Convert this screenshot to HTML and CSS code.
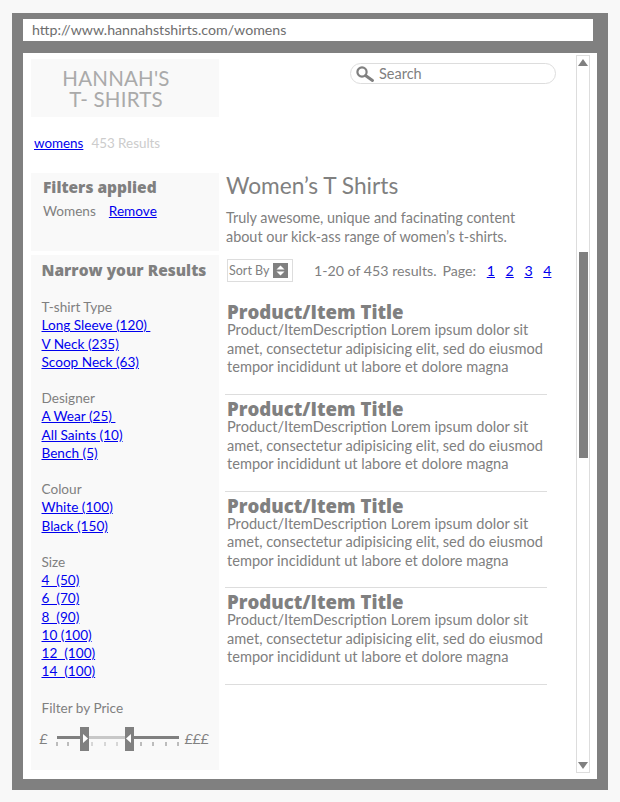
FILE: index.html
```html
<!DOCTYPE html>
<html lang="en">
<head>
  <meta charset="UTF-8" />
  <title>Hannah's T-Shirts - Womens</title>
  <link rel="stylesheet" href="styles.css">
</head>
<body>

<div class="frame">
  <div class="url-bar">http://www.hannahstshirts.com/womens</div>

  <div class="window">
    <div class="page">
      <div class="header">
        <div class="logo">HANNAH'S<br>T- SHIRTS</div>
        <div class="search">
          <svg class="search-icon" width="20" height="18" viewBox="0 0 20 18">
            <circle cx="7" cy="7" r="4.6" fill="none" stroke="#808080" stroke-width="2.2"/>
            <path d="M10.5 10.5 L17.5 15.5" stroke="#808080" stroke-width="3" stroke-linecap="round"/>
          </svg>
          <span>Search</span>
        </div>
      </div>

      <div class="crumbs"><a href="#">womens</a><span class="count">453 Results</span></div>

      <div class="columns">
        <div class="sidebar">
          <div class="panel applied">
            <h3>Filters applied</h3>
            <div class="applied-row"><span>Womens</span><a href="#">Remove</a></div>
          </div>

          <div class="panel narrow">
            <h3>Narrow your Results</h3>

            <div class="group">
              <div class="group-title">T-shirt Type</div>
              <a href="#">Long Sleeve (120)&nbsp;</a>
              <a href="#">V Neck (235)</a>
              <a href="#">Scoop Neck (63)</a>
            </div>

            <div class="group">
              <div class="group-title">Designer</div>
              <a href="#">A Wear (25)&nbsp;</a>
              <a href="#">All Saints (10)</a>
              <a href="#">Bench (5)</a>
            </div>

            <div class="group">
              <div class="group-title">Colour</div>
              <a href="#">White (100)</a>
              <a href="#">Black (150)</a>
            </div>

            <div class="group">
              <div class="group-title">Size</div>
              <a href="#">4&nbsp; (50)</a>
              <a href="#">6&nbsp; (70)</a>
              <a href="#">8&nbsp; (90)</a>
              <a href="#">10 (100)</a>
              <a href="#">12&nbsp; (100)</a>
              <a href="#">14&nbsp; (100)</a>
            </div>

            <div class="group price">
              <div class="group-title">Filter by Price</div>
              <div class="slider">
                <span class="pound">£</span>
                <svg class="slider-track" width="124" height="25" viewBox="0 0 124 25">
                  <rect x="1" y="9" width="122" height="3" fill="#808080"/>
                  <rect x="33" y="9" width="36" height="3" fill="#c8c8c8"/>
                  <path d="M1 15v4M12 15v4M85 15v4M97 15v4M110 15v4M122 15v4" stroke="#808080" stroke-width="1"/>
                  <path d="M36 15v4M49 15v4M61 15v4" stroke="#b4b4b4" stroke-width="1"/>
                  <rect x="24" y="0" width="9" height="24" fill="#808080"/>
                  <rect x="69" y="0" width="9" height="24" fill="#808080"/>
                  <path d="M27 7 L32 11.5 L27 16 Z" fill="#fff"/>
                  <path d="M75 7 L70 11.5 L75 16 Z" fill="#fff"/>
                </svg>
                <span class="pound">£££</span>
              </div>
            </div>
          </div>
        </div>

        <div class="main">
          <h1>Women’s T Shirts</h1>
          <p class="intro">Truly awesome, unique and facinating content about our kick-ass range of women’s t-shirts.</p>

          <div class="toolbar">
            <div class="sort">
              <span>Sort By</span>
              <svg width="15" height="15" viewBox="0 0 15 15">
                <rect width="15" height="15" fill="#808080"/>
                <path d="M7.5 2.5 L11.5 6.5 H3.5 Z M7.5 12.5 L3.5 8.5 H11.5 Z" fill="#fff"/>
              </svg>
            </div>
            <div class="results">1-20 of 453 results.</div>
            <div class="pages">Page:
              <a href="#">1</a><a href="#">2</a><a href="#">3</a><a href="#">4</a>
            </div>
          </div>

          <div class="product">
            <h2>Product/Item Title</h2>
            <p>Product/ItemDescription Lorem ipsum dolor sit amet, consectetur adipisicing elit, sed do eiusmod tempor incididunt ut labore et dolore magna</p>
          </div>
          <div class="product">
            <h2>Product/Item Title</h2>
            <p>Product/ItemDescription Lorem ipsum dolor sit amet, consectetur adipisicing elit, sed do eiusmod tempor incididunt ut labore et dolore magna</p>
          </div>
          <div class="product">
            <h2>Product/Item Title</h2>
            <p>Product/ItemDescription Lorem ipsum dolor sit amet, consectetur adipisicing elit, sed do eiusmod tempor incididunt ut labore et dolore magna</p>
          </div>
          <div class="product">
            <h2>Product/Item Title</h2>
            <p>Product/ItemDescription Lorem ipsum dolor sit amet, consectetur adipisicing elit, sed do eiusmod tempor incididunt ut labore et dolore magna</p>
          </div>
        </div>
      </div>
    </div>

    <div class="scrollbar">
      <div class="arrow-up"></div>
      <div class="track">
        <div class="thumb"></div>
      </div>
      <div class="arrow-down"></div>
    </div>
  </div>
</div>

</body>
</html>
```

FILE: styles.css
```css
html, body { margin: 0; padding: 0; }
body {
  width: 620px; height: 802px; overflow: hidden; background-color: #f8f8f8;
  font-family: Lato, "Open Sans", sans-serif; color: #808080; font-size: 14px;
}
a { color: #0000ee; text-decoration: underline; }

.frame {
  width: 596px; height: 777px; margin: 13px 0 0 12px; padding: 6px 11px 11px 11px;
  box-sizing: border-box; background-color: #808080; display: flex; flex-direction: column;
}
.url-bar {
  width: 570px; height: 22px; line-height: 22px; padding-left: 9px; box-sizing: border-box;
  background-color: #fff; color: #6e6e6e; font-size: 14.2px; flex: none;
}
.window {
  margin-top: 12px; flex: 1; background-color: #fff; display: flex; width: 574px;
  padding: 0 8px 0 8px; box-sizing: border-box; min-height: 0;
}

.page { width: 545px; flex: none; }
.header { display: flex; height: 64px; padding-top: 6px; box-sizing: border-box; }
.logo {
  width: 188px; height: 58px; background-color: #f9f9f9; color: #aaa; text-align: center;
  font-size: 20.5px; letter-spacing: 0.2px; line-height: 20.5px; padding: 9px 18px 0 0; box-sizing: border-box;
}
.search {
  margin: 4px 0 0 131px; width: 206px; height: 21px; border: 1px solid #ddd; border-radius: 11px;
  box-sizing: border-box; display: flex; align-items: center; gap: 4px; padding-left: 4px;
  color: #808080; font-size: 14.5px;
}

.crumbs { height: 56px; padding: 16px 0 0 3px; box-sizing: border-box; font-size: 13.4px; line-height: 20px; }
.crumbs .count { color: #ccc; margin-left: 8px; }

.columns { display: flex; gap: 6px; }
.sidebar { width: 188px; flex: none; display: flex; flex-direction: column; gap: 4px; }
.panel { background-color: #f9f9f9; box-sizing: border-box; }
.panel h3 { margin: 0; font-family: "Open Sans", sans-serif; font-size: 15.5px; font-weight: 800; color: #808080; line-height: 20px; }
.applied { height: 78px; padding: 4px 12px; }
.applied-row { margin-top: 4px; display: flex; gap: 13px; line-height: 20px; font-size: 13.6px; }
.narrow { height: 515px; padding: 5px 0 0 10.5px; }
.group { margin-top: 18px; display: flex; flex-direction: column; align-items: flex-start; font-size: 13.6px; line-height: 18.25px; }
.group-title { color: #808080; }
.slider { display: flex; align-items: center; gap: 8px; margin: 10px 0 0 -2px; white-space: nowrap; }
.slider-track { flex: none; margin-right: -3px; }
.pound { font-style: italic; font-size: 14px; }

.main { flex: none; width: 322px; }
.main h1 { margin: 0 0 0 1px; font-size: 22.7px; font-weight: 400; line-height: 26px; color: #808080; }
.intro { margin: 10px 0 0 1px; font-size: 14.4px; line-height: 18.5px; width: 310px; }
.toolbar { display: flex; align-items: center; margin: 12px 0 16.4px 2px; height: 24px; white-space: nowrap; }
.sort {
  width: 66px; height: 23px; border: 1px solid #ddd; box-sizing: border-box; display: flex;
  align-items: center; gap: 4px; padding-left: 1px; font-size: 12.5px; flex: none;
}
.results { margin-left: 21px; font-size: 14.2px; }
.pages { margin-left: 6px; font-size: 14.2px; display: flex; }
.pages a { margin-left: 10.6px; }

.product { border-bottom: 1px solid #ddd; padding: 4px 0 0 2px; height: 96.7px; box-sizing: border-box; }
.product h2 { margin: 0; font-family: "Open Sans", sans-serif; font-size: 18.6px; font-weight: 800; line-height: 19px; color: #808080; }
.product p { margin: 0; font-size: 14.6px; line-height: 18.5px; width: 320px; }

.scrollbar {
  width: 14px; height: 718px; margin: 2px 0 0 0; border: 1px solid #ddd; box-sizing: border-box;
  flex: none; display: flex; flex-direction: column; align-items: center;
}
.track { flex: 1; width: 100%; padding-top: 186px; box-sizing: border-box; display: flex; justify-content: center; }
.thumb { width: 9px; height: 206px; background-color: #808080; }
.arrow-up, .arrow-down { width: 0; height: 0; border-left: 5px solid transparent; border-right: 5px solid transparent; flex: none; }
.arrow-up { border-bottom: 7px solid #808080; margin-top: 3px; }
.arrow-down { border-top: 7px solid #808080; margin-bottom: 3px; }
```
